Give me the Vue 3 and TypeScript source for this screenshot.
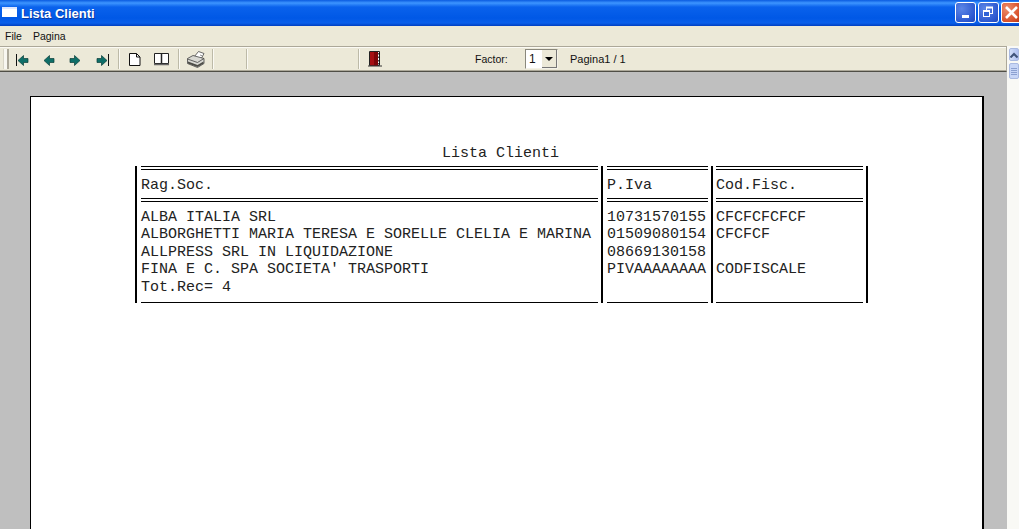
<script setup lang="ts">
const columns: { cls: string; head: string; rows: string[] }[] = [
  {
    cls: 'c1',
    head: 'Rag.Soc.',
    rows: [
      'ALBA ITALIA SRL',
      'ALBORGHETTI MARIA TERESA E SORELLE CLELIA E MARINA',
      'ALLPRESS SRL IN LIQUIDAZIONE',
      "FINA E C. SPA SOCIETA' TRASPORTI",
      'Tot.Rec= 4',
    ],
  },
  { cls: 'c2', head: 'P.Iva', rows: ['10731570155', '01509080154', '08669130158', 'PIVAAAAAAAA', ''] },
  { cls: 'c3', head: 'Cod.Fisc.', rows: ['CFCFCFCFCF', 'CFCFCF', '', 'CODFISCALE', ''] },
]
</script>

<template>
  <div class="win">
    <header class="title">
      <span class="appicon"></span>
      <span class="title-text">Lista Clienti</span>
      <span class="wbtns">
        <span class="wbtn"><i class="min"></i></span>
        <span class="wbtn">
          <svg width="21" height="21" viewBox="0 0 21 21"><rect x="8.500" y="5.500" width="6" height="6" fill="none" stroke="#fff"/><rect x="5.500" y="8.500" width="6" height="6" fill="#2f62d6" stroke="#fff"/><path d="M8 5.500h7M5 9h7" stroke="#fff" stroke-width="2"/></svg>
        </span>
        <span class="wbtn close">
          <svg width="21" height="21" viewBox="0 0 21 21"><path d="M5 5l11 11M16 5L5 16" stroke="#fff" stroke-width="2.600"/></svg>
        </span>
      </span>
    </header>
    <nav class="menu"><span>File</span><span>Pagina</span></nav>
    <div class="body">
      <div class="main">
        <div class="toolbar">
          <span class="grip"></span>
          <div class="tgroup nav">
            <div class="navicons">
              <svg width="13" height="13" viewBox="0 0 13 13"><path d="M.5 1v12" stroke="#111"/><path d="M2 7.500L7.500 2.500v3H12v4H7.500v3z" fill="#0e6f68" stroke="#0a3d3a" stroke-width=".7"/></svg>
              <svg width="13" height="13" viewBox="0 0 13 13"><path d="M1 7.500L6.500 2.500v3H11v4H6.500v3z" fill="#0e6f68" stroke="#0a3d3a" stroke-width=".7"/></svg>
              <svg width="13" height="13" viewBox="0 0 13 13"><path d="M11 7.500L5.500 2.500v3H1v4h4.500v3z" fill="#0e6f68" stroke="#0a3d3a" stroke-width=".7"/></svg>
              <svg width="13" height="13" viewBox="0 0 13 13"><path d="M12.500 1v12" stroke="#111"/><path d="M11 7.500L5.500 2.500v3H1v4h4.500v3z" fill="#0e6f68" stroke="#0a3d3a" stroke-width=".7"/></svg>
            </div>
          </div>
          <div class="tgroup docs">
            <svg width="12" height="13" viewBox="0 0 12 13"><path d="M.5.5h7l3.500 3.500v8.500H.5z" fill="#fff" stroke="#111"/><path d="M7.500.5v3.500H11" fill="none" stroke="#111"/></svg>
            <svg width="15" height="13" viewBox="0 0 15 13"><path d="M.5.5h14v10H.5z" fill="#fff" stroke="#222"/><path d="M7.500.5v10" stroke="#222" stroke-width="1.500"/><path d="M0 11.500h15" stroke="#666" stroke-width="1.500"/></svg>
          </div>
          <div class="tgroup printer">
            <svg width="18" height="17" viewBox="0 0 18 17"><path d="M7 6l4.500-5.500L17 2.500l-3 5.500z" fill="#fff" stroke="#444" stroke-width=".8"/><path d="M.5 7.500L6 4.500l11 3v5l-6.500 4L.5 12.500z" fill="#d8d8d2" stroke="#444" stroke-width=".8"/><path d="M.5 8l10 3.500L17 7.500" fill="none" stroke="#444" stroke-width=".8"/><path d="M1 10.500l9.500 3.500 6-3.500v2l-6 3.500-9.500-3.500z" fill="#4c4c46"/><path d="M13 4l2 .7" stroke="#777" stroke-width=".8"/></svg>
          </div>
          <div class="tgroup blank"></div>
          <div class="tgroup spacer"></div>
          <div class="door">
            <svg width="14" height="16" viewBox="0 0 14 16"><path d="M1.500.5h10v14h-10z" fill="#fff" stroke="#222"/><path d="M2 1h8v13.500H2z" fill="#a50f12"/><path d="M6 1h4v13.500H6z" fill="#7c0508"/><path d="M11 2v1.500M11 5.500V7M11 9v1.500M11 12v1.500" stroke="#111" stroke-width="1.500"/><path d="M0 15h14" stroke="#333"/></svg>
          </div>
          <div class="factor">
            <span class="flabel">Factor:</span>
            <span class="combo"><span class="cval">1</span><span class="carrow"><i></i></span></span>
            <span class="pageno">Pagina1 / 1</span>
          </div>
        </div>
        <div class="viewer">
          <section class="sheet">
            <h1 class="rtitle">Lista Clienti</h1>
            <div class="rtable">
              <div v-for="c in columns" :key="c.head" class="col" :class="c.cls">
                <div class="dbl"></div>
                <div class="head">{{ c.head }}</div>
                <div class="dbl"></div>
                <div class="rows">
                  <div v-for="(r, i) in c.rows" :key="i" class="row">{{ r }}</div>
                </div>
                <div class="end"></div>
              </div>
            </div>
          </section>
        </div>
      </div>
      <aside class="scroll">
        <span class="sbtn"><svg width="8" height="6" viewBox="0 0 8 6"><path d="M.5 5.500l3.500-3.500 3.500 3.500" fill="none" stroke="#3f5379" stroke-width="2"/></svg></span>
        <span class="thumb"><i></i><i></i><i></i><i></i></span>
      </aside>
    </div>
  </div>
</template>

<style scoped>
.win {
  width: 1019px;
  height: 529px;
  overflow: hidden;
  display: flex;
  flex-direction: column;
  font-family: "Liberation Sans", Arial, sans-serif;
  font-size: 11px;
  color: #111;
  background: #ece9d8;
}
.title {
  height: 26px;
  flex: none;
  display: flex;
  align-items: center;
  padding-left: 2px;
  background: linear-gradient(180deg, #0a5be0 0, #3d95ff 3px, #0a62ec 7px, #0058e6 18px, #0a5fea 23px, #003fc0 26px);
}
.appicon {
  width: 15px;
  height: 10px;
  margin-right: 4px;
  margin-top: -2px;
  background: #fff;
  border-top: 2px solid #dfe8ff;
  box-sizing: border-box;
}
.title-text {
  color: #fff;
  font-weight: 700;
  font-size: 13px;
  text-shadow: 1px 1px 0 #0a3aa0;
}
.wbtns {
  margin-left: auto;
  display: flex;
  gap: 2px;
  margin-top: -1px;
}
.wbtn {
  width: 21px;
  height: 21px;
  box-sizing: border-box;
  border: 1px solid #fff;
  border-radius: 3px;
  background: radial-gradient(circle at 30% 30%, #5c86e6, #2a56cf 75%, #2048b8);
  overflow: hidden;
  display: flex;
}
.wbtn svg {
  flex: none;
  margin: -1px;
}
.wbtn.close {
  width: 18px;
  background: radial-gradient(circle at 30% 30%, #ec8d6c, #d9522c 70%, #b83a1a);
  border-radius: 3px 0 0 3px;
  border-right: 0;
}
.min {
  width: 7px;
  height: 3px;
  background: #fff;
  margin: 12px 0 0 6px;
}
.menu {
  height: 20px;
  flex: none;
  display: flex;
  align-items: center;
  gap: 11px;
  padding-left: 5px;
  font-size: 10.500px;
  background: #ece9d8;
}
.body {
  flex: 1;
  display: flex;
  min-height: 0;
}
.main {
  flex: 1;
  display: flex;
  flex-direction: column;
  min-width: 0;
}
.toolbar {
  height: 26px;
  flex: none;
  box-sizing: border-box;
  display: flex;
  align-items: stretch;
  background: #ece9d8;
  border-top: 1px solid #aca899;
  border-bottom: 1px solid #4f4e46;
  border-right: 1px solid #aca899;
  box-shadow: inset 0 1px 0 #fbfaf4, inset 0 -1px 0 #aca899;
}
.grip {
  width: 6px;
  box-sizing: border-box;
  margin: 2px 0 2px 3px;
  background: #f8f7f0;
  border-right: 2px solid #aca899;
  border-left: 1px solid #d8d5c6;
}
.tgroup {
  flex: none;
  box-sizing: border-box;
  display: flex;
  align-items: center;
  border-right: 1px solid #bdbaa8;
  margin: 2px 0 2px;
  box-shadow: 1px 0 0 #fbfaf4;
}
.nav {
  width: 110px;
  padding-left: 7px;
}
.navicons {
  width: 93px;
  display: flex;
  justify-content: space-between;
}
.docs {
  width: 60px;
  padding-left: 10px;
  gap: 13px;
}
.printer {
  width: 34px;
  padding-left: 8px;
}
.blank {
  width: 34px;
}
.spacer {
  width: 112px;
}
.door {
  width: 116px;
  flex: none;
  box-sizing: border-box;
  padding-left: 9px;
  display: flex;
  align-items: center;
}
.factor {
  display: flex;
  align-items: center;
}
.flabel {
  font-size: 10.500px;
  width: 50px;
}
.combo {
  width: 33px;
  height: 20px;
  box-sizing: border-box;
  display: flex;
  background: #fff;
  border: 1px solid #8a887c;
  border-right-color: #f4f2e8;
  border-bottom-color: #f4f2e8;
  margin-right: 12px;
}
.cval {
  flex: 1;
  font-size: 12px;
  padding-left: 3px;
  line-height: 18px;
}
.carrow {
  width: 15px;
  background: #ece9d8;
  border-right: 1px solid #777;
  border-bottom: 1px solid #777;
  box-sizing: border-box;
  display: flex;
  align-items: center;
  justify-content: center;
}
.carrow i {
  border: 4px solid transparent;
  border-top: 4px solid #000;
  border-bottom: 0;
}
.pageno {
  font-size: 11px;
}
.viewer {
  flex: 1;
  min-height: 0;
  overflow: hidden;
  background: #bfbfbf;
  padding: 24px 23px 0 30px;
}
.sheet {
  height: 500px;
  box-sizing: border-box;
  background: #fff;
  border: 1px solid #000;
  border-right-width: 2px;
  padding-top: 48px;
  padding-left: 104px;
  font-family: "Liberation Mono", "Courier New", monospace;
  font-size: 15px;
  color: #222;
}
.rtitle {
  margin: 0;
  font: inherit;
  height: 21px;
  line-height: 18px;
  padding-left: 307px;
}
.rtable {
  display: flex;
  width: 733px;
  height: 137px;
}
.col {
  box-sizing: border-box;
  border-left: 2px solid #000;
  display: flex;
  flex-direction: column;
  flex: none;
}
.c1 { width: 466px; padding: 0 3px 0 4px; }
.c2 { width: 110px; padding: 0 3px 0 4px; }
.c3 { width: 157px; padding: 0 3px 0 3px; border-right: 2px solid #000; }
.dbl {
  height: 4px;
  flex: none;
  border-top: 1px solid #000;
  border-bottom: 1px solid #000;
  box-sizing: border-box;
}
.head {
  height: 28px;
  flex: none;
  line-height: 32px;
}
.rows {
  flex: 1;
  padding-top: 6.750px;
}
.row {
  height: 17.500px;
  line-height: 17.500px;
  white-space: pre;
}
.end {
  height: 1px;
  flex: none;
  background: #000;
}
.scroll {
  width: 12px;
  flex: none;
  background: #f9f9f5;
  display: flex;
  flex-direction: column;
  gap: 2px;
  padding: 2px 0 0 2px;
  box-sizing: border-box;
}
.sbtn {
  height: 13px;
  flex: none;
  box-sizing: border-box;
  background: linear-gradient(90deg, #d2def9, #aebff0);
  border: 1px solid #a9b9e0;
  border-radius: 2px;
  display: flex;
  align-items: center;
  justify-content: center;
}
.sbtn svg {
  flex: none;
}
.thumb {
  height: 16px;
  flex: none;
  box-sizing: border-box;
  background: #c8d6f6;
  border: 1px solid #a9b9e0;
  border-radius: 2px;
  display: flex;
  flex-direction: column;
  justify-content: center;
  gap: 1px;
  padding: 0 1px;
}
.thumb i {
  height: 1px;
  background: #8ba0d0;
}
</style>

<style>
html, body { margin: 0; overflow: hidden; }
</style>
